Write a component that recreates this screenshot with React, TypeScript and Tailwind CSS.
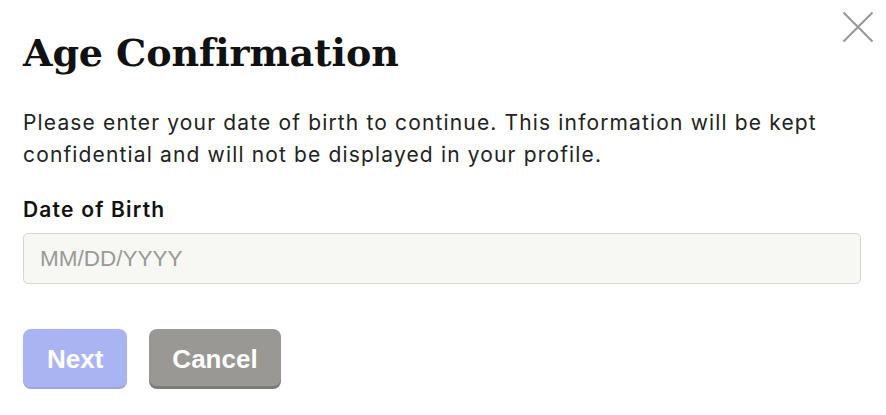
import { useState } from "react";

export default function App() {
  const [dob, setDob] = useState<string>("");

  return (
    <div className="relative w-[886px] h-[415px] bg-white px-[23px] pt-[27px] font-['Inter',sans-serif]">
      <button
        type="button"
        aria-label="Close"
        className="absolute right-[12px] top-[11px] w-[32px] h-[32px] text-[#999999]"
      >
        <svg viewBox="0 0 32 32" width="32" height="32" fill="none" stroke="currentColor" strokeWidth="2.2">
          <path d="M1.5 1.5 L30.5 30.5 M30.5 1.5 L1.5 30.5" />
        </svg>
      </button>

      <h1 className="font-['DejaVu_Serif',serif] text-[38px] leading-[52px] font-bold text-[#111111] tracking-[-0.1px]">
        Age Confirmation
      </h1>

      <p className="mt-[28px] w-[830px] text-[21px] leading-[32px] tracking-[1.15px] text-[#222222]">
        Please enter your date of birth to continue. This information will be kept confidential and will not be
        displayed in your profile.
      </p>

      <label htmlFor="dob" className="block mt-[25px] text-[21px] leading-[28px] tracking-[1.2px] font-semibold text-[#111111]">
        Date of Birth
      </label>
      <input
        id="dob"
        type="text"
        value={dob}
        onChange={(e) => setDob(e.target.value)}
        placeholder="MM/DD/YYYY"
        className="mt-[9px] block w-[838px] h-[51px] rounded-[5px] border border-[#d6d6d0] bg-[#f7f7f3] pl-[16px] font-['Liberation_Sans',sans-serif] text-[22.5px] text-[#333333] placeholder:text-[#999999] outline-none"
      />

      <div className="mt-[45px] flex gap-[22px]">
        <button
          type="button"
          className="h-[60px] px-[24px] rounded-[8px] bg-[#aab4f3] shadow-[inset_0_-2px_0_rgba(0,0,0,0.08)] font-['Liberation_Sans',sans-serif] text-[26px] font-bold text-white"
        >
          Next
        </button>
        <button
          type="button"
          className="h-[60px] px-[23px] rounded-[8px] bg-[#999894] shadow-[inset_0_-3px_0_rgba(0,0,0,0.18)] font-['Liberation_Sans',sans-serif] text-[26px] font-bold text-white"
        >
          Cancel
        </button>
      </div>
    </div>
  );
}
